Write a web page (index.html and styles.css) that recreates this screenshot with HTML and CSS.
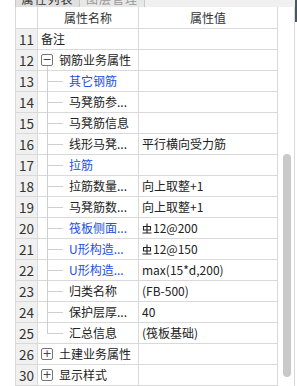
FILE: index.html
```html
<!DOCTYPE html>
<html lang="zh">
<head>
<meta charset="utf-8">
<link rel="stylesheet" href="styles.css">
</head>
<body>
<div class="page">
  <div class="content">
    <div class="tabs">
      <div class="tab active"><span>属性列表</span></div>
      <div class="tab"><span>图层管理</span></div>
    </div>
    <div class="main">
      <div class="grid">
        <div class="row head"><div class="num"></div><div class="name c">属性名称</div><div class="val c">属性值</div></div>
        <div class="row"><div class="num">11</div><div class="name top">备注</div><div class="val"></div></div>
        <div class="row"><div class="num">12</div><div class="name grp open"><span class="box">−</span>钢筋业务属性</div><div class="val"></div></div>
        <div class="row"><div class="num">13</div><div class="name child blue">其它钢筋</div><div class="val"></div></div>
        <div class="row"><div class="num">14</div><div class="name child">马凳筋参...</div><div class="val"></div></div>
        <div class="row"><div class="num">15</div><div class="name child">马凳筋信息</div><div class="val"></div></div>
        <div class="row"><div class="num">16</div><div class="name child">线形马凳...</div><div class="val">平行横向受力筋</div></div>
        <div class="row"><div class="num">17</div><div class="name child blue">拉筋</div><div class="val"></div></div>
        <div class="row"><div class="num">18</div><div class="name child">拉筋数量...</div><div class="val">向上取整+1</div></div>
        <div class="row"><div class="num">19</div><div class="name child">马凳筋数...</div><div class="val">向上取整+1</div></div>
        <div class="row"><div class="num">20</div><div class="name child blue">筏板侧面...</div><div class="val"><svg class="rb" viewBox="0 0 10 11" width="10" height="11"><path d="M5 0.5V9.5M1.5 3.5H8.5V7H1.5ZM0.5 10H9.5" fill="none" stroke="#222" stroke-width="1.1"/></svg>12@200</div></div>
        <div class="row"><div class="num">21</div><div class="name child blue">U形构造...</div><div class="val"><svg class="rb" viewBox="0 0 10 11" width="10" height="11"><path d="M5 0.5V9.5M1.5 3.5H8.5V7H1.5ZM0.5 10H9.5" fill="none" stroke="#222" stroke-width="1.1"/></svg>12@150</div></div>
        <div class="row"><div class="num">22</div><div class="name child blue">U形构造...</div><div class="val">max(15*d,200)</div></div>
        <div class="row"><div class="num">23</div><div class="name child">归类名称</div><div class="val">(FB-500)</div></div>
        <div class="row"><div class="num">24</div><div class="name child">保护层厚...</div><div class="val">40</div></div>
        <div class="row"><div class="num">25</div><div class="name child last">汇总信息</div><div class="val">(筏板基础)</div></div>
        <div class="row"><div class="num">26</div><div class="name grp"><span class="box">+</span>土建业务属性</div><div class="val"></div></div>
        <div class="row"><div class="num">30</div><div class="name grp"><span class="box">+</span>显示样式</div><div class="val"></div></div>
      </div>
      <div class="vscroll"><div class="thumb"></div></div>
    </div>
  </div>
  <div class="edge"><div class="edgebar"></div></div>
</div>
</body>
</html>
```
FILE: styles.css
```css
* { box-sizing: border-box; }
html, body { margin: 0; padding: 0; background: #fff; }
body {
  width: 297px; height: 386px; overflow: hidden;
  font-family: "Noto Sans CJK SC", "Noto Sans", sans-serif;
  font-size: 12px; color: #222;
}
.page { width: 297px; height: 386px; display: flex; }
.content { width: 295px; display: flex; flex-direction: column; }
.tabs {
  height: 8px; margin-left: 15px; width: 280px;
  background: #f0f0f0; display: flex; overflow: hidden;
}
.tab {
  width: 65px; height: 8px; overflow: hidden;
  border-right: 1px solid #c8c8c8; background: #e8e8e8; color: #999;
}
.tab.active { background: #e0e0e0; color: #333; border-left: 1px solid #c8c8c8; }
.tab span {
  display: block; text-align: center; line-height: 16px; margin-top: -9px;
  font-size: 12px; letter-spacing: 1px;
}
.main { flex: 1; display: flex; padding-left: 15px; }
.grid { width: 263px; border-left: 1px solid #d9d9d9; display: flex; flex-direction: column; }
.row { display: flex; height: 21px; }
.row > div { border-bottom: 1px solid #d9d9d9; border-right: 1px solid #d9d9d9; line-height: 20px; white-space: nowrap; overflow: hidden; }
.row.head { height: 22px; }
.row.head > div { line-height: 21px; color: #333; }
.num { width: 22px; background: #f0f0f0; text-align: center; font-size: 13.5px; color: #333; }
.head .num { background: #fff; }
.name { width: 101px; position: relative; overflow: visible !important; }
.val { width: 139px; padding-left: 3px; }
.c { text-align: center; padding-left: 0; }
.top { padding-left: 3px; }
.grp { padding-left: 3px; display: flex; align-items: center; gap: 6px; }
.box {
  width: 12px; height: 12px; border: 1px solid #777; border-radius: 2px;
  display: flex; align-items: center; justify-content: center;
  font-size: 11px; line-height: 10px; color: #444; font-family: "DejaVu Sans", sans-serif;
}
.grp.open::after {
  content: ""; position: absolute; left: 9px; top: 16px; bottom: -1px;
  border-left: 1px solid #cfcfcf;
}
.child { padding-left: 31px; }
.child::before {
  content: ""; position: absolute; left: 9px; top: 10px; width: 16px;
  border-top: 1px solid #cfcfcf;
}
.child::after {
  content: ""; position: absolute; left: 9px; top: 0; bottom: -1px;
  border-left: 1px solid #cfcfcf;
}
.child.last::after { bottom: auto; height: 11px; }
.blue { color: #2350e0; }
.rb { vertical-align: -1px; margin-right: 1px; }
.vscroll { width: 17px; border-right: 1px solid #d9d9d9; position: relative; }
.thumb {
  position: absolute; left: 5px; top: 147px; width: 8px; height: 223px;
  background: #c9c9c9; border-radius: 4px;
}
.edge { width: 2px; }
.edgebar { height: 22px; background: #4b5663; }
```
